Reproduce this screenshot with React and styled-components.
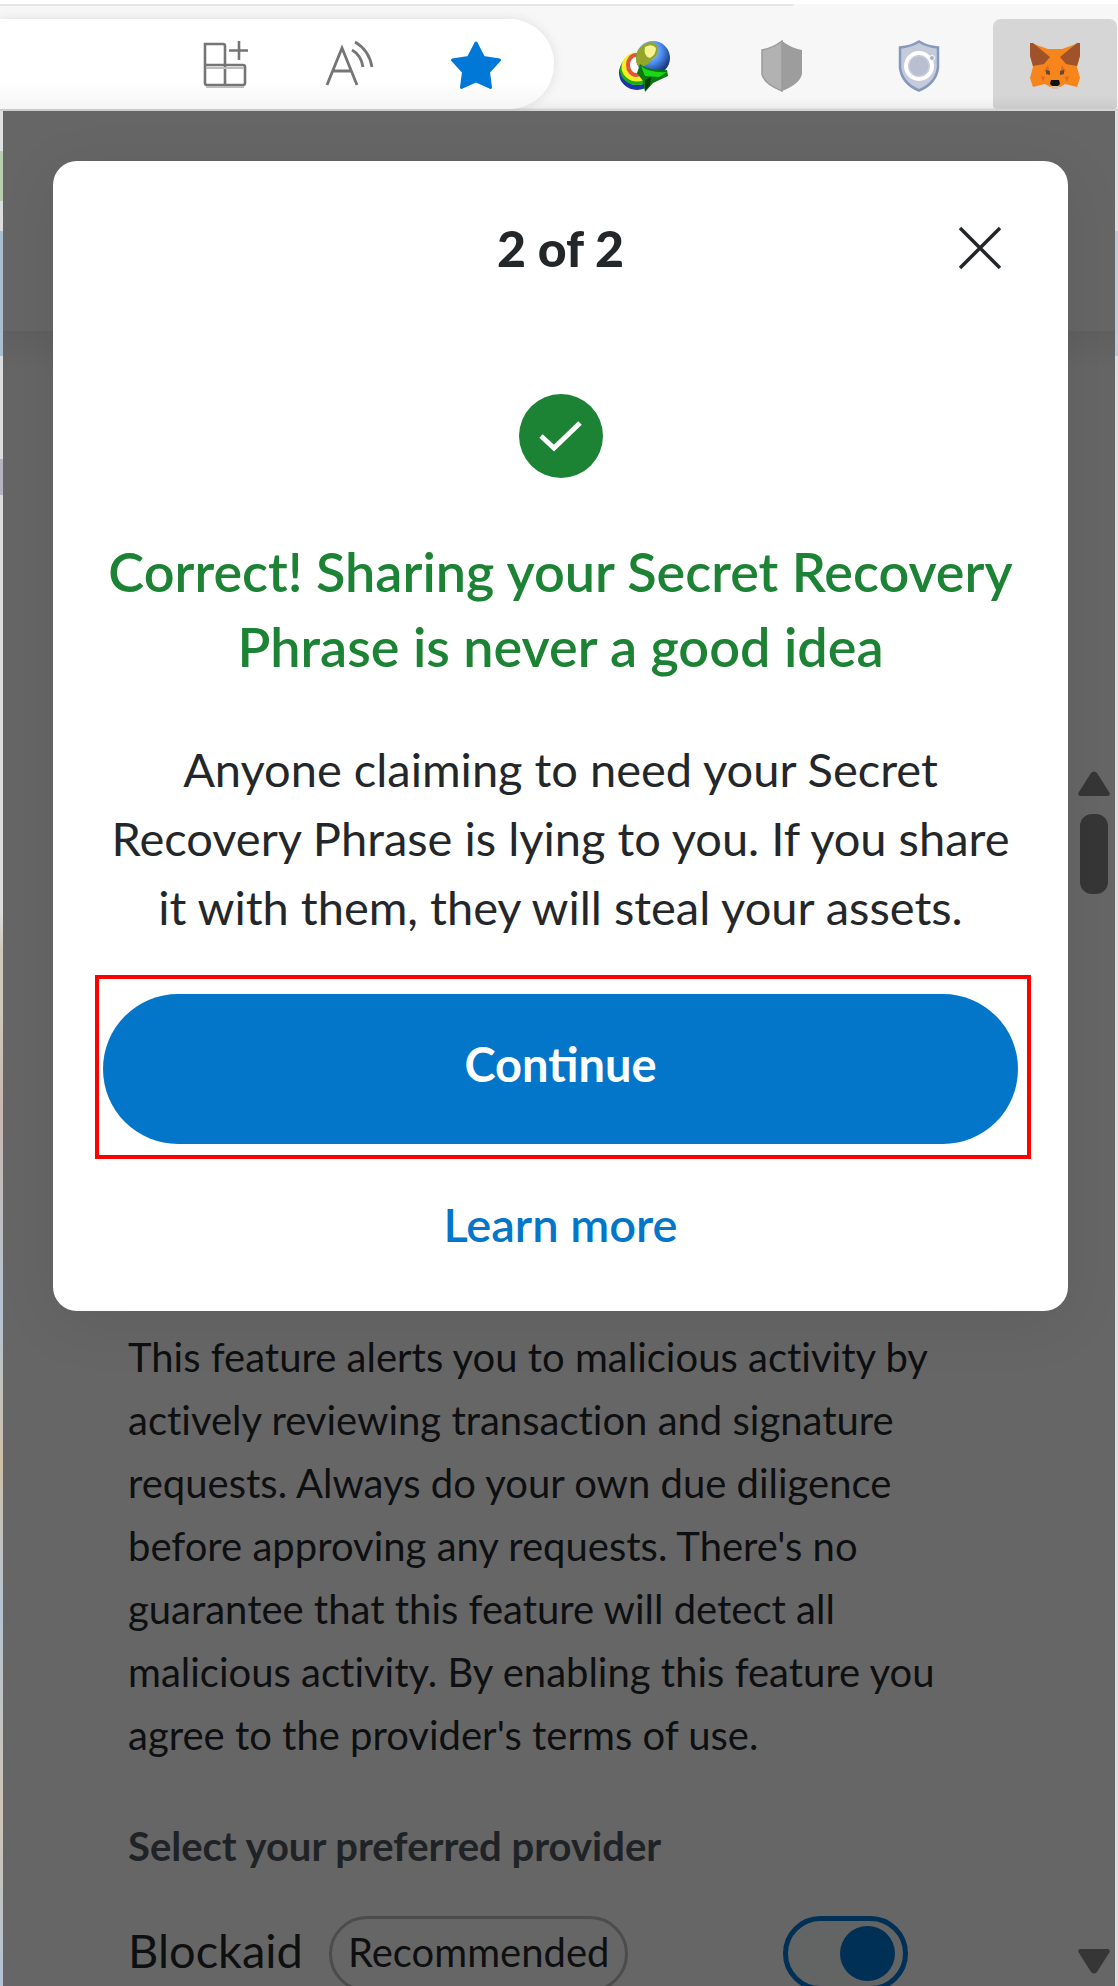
import React from "react";
import styled, { createGlobalStyle } from "styled-components";

const GlobalStyle = createGlobalStyle`
  *, *::before, *::after { box-sizing: border-box; }
  body {
    margin: 0;
    background: #d9dcdf;
    font-family: Lato, "Open Sans", sans-serif;
    font-variant-ligatures: none;
  }
  h1, h2, h3, p { margin: 0; }
  button { font-family: inherit; border: 0; padding: 0; background: none; cursor: pointer; }
`;

const Window = styled.div`
  display: flex;
  flex-direction: column;
  height: 100vh;
  overflow: hidden;
`;

const Browser = styled.header`
  display: flex;
  flex: none;
  height: 111px;
  padding-top: 19px;
  background:
    linear-gradient(#e6e6e6, #e6e6e6) 0 4px / 71% 2px no-repeat,
    linear-gradient(#fff 0 4px, #f7f7f7 4px 98px, #eeeeee 108px, #d4d4d4 109px);
`;

const AddressBar = styled.div`
  display: flex;
  flex: 1;
  align-items: center;
  justify-content: flex-end;
  gap: 75px;
  height: 90px;
  padding: 4px 52px 2px 0;
  border-radius: 0 45px 45px 0;
  background: linear-gradient(#fff 70%, #f5f5f5);
  box-shadow: 0 0 12px rgba(0, 0, 0, 0.1);
`;

const Extensions = styled.nav`
  display: flex;
  align-items: center;
  justify-content: flex-end;
  width: 564px;
  height: 90px;
  padding-right: 1px;
`;

const ToolButton = styled.button`
  display: flex;
  align-items: center;
  justify-content: center;
`;

const ExtensionButton = styled.button`
  display: flex;
  align-items: center;
  justify-content: center;
  width: ${(p) => (p.$active ? 124 : 137)}px;
  height: 90px;
  margin-left: ${(p) => (p.$active ? 6 : 0)}px;
  padding-top: 4px;
  border-radius: 8px 8px 4px 4px;
  background: ${(p) => (p.$active ? "linear-gradient(#d6d6d6 85%, #cacaca)" : "none")};
`;

const Desktop = styled.div`
  display: flex;
  flex: 1;
  min-height: 0;
  padding: 0 3px;
  background:
    linear-gradient(#dfe1e2 0 40px, #b7cfae 40px 90px, #dcdddf 90px 120px, #a9bfd0 120px 245px, #dcdddf 245px 348px, #b4b3bf 348px 384px, #dcdddf 384px 800px, #cfc8b8 840px 900px, #c9b8b0 1000px, #b4c3d2 1200px, #cfc0a8 1350px, #b4c3d2 1500px, #d0c4b4 1700px, #b0c2d4) 0 0 / 3px 100% no-repeat,
    linear-gradient(#e0e0e0 0 120px, #c2ccd6 120px 245px, #e0e0e0 245px);
`;

const Popup = styled.main`
  position: relative;
  display: flex;
  flex: 1;
  flex-direction: column;
  overflow: hidden;
  background: #666;
`;

const PopupHeader = styled.div`
  flex: none;
  height: 220px;
`;

const PopupBody = styled.div`
  display: flex;
  flex: 1;
  min-height: 0;
  padding-top: 425px;
  background: linear-gradient(#606060, #666 40px);
`;

const Settings = styled.section`
  flex: 1;
  padding: 570px 80px 0 125px;
`;

const Description = styled.p`
  font-size: 40px;
  line-height: 63px;
  color: #0e0f11;
`;

const ProviderTitle = styled.h3`
  margin-top: 48px;
  font-size: 40px;
  font-weight: 700;
  line-height: 62px;
  color: #202326;
`;

const ProviderRow = styled.div`
  display: flex;
  align-items: flex-start;
  margin-top: 39px;
  padding-right: 84px;
  color: #0e0f11;
`;

const ProviderName = styled.label`
  font-size: 47px;
  line-height: 68px;
`;

const Badge = styled.span`
  margin-left: 26px;
  padding: 0 16px 4px;
  border: 3px solid #4c4c4c;
  border-radius: 38px;
  font-size: 40px;
  line-height: 66px;
`;

const Toggle = styled.input`
  appearance: none;
  display: flex;
  align-items: center;
  justify-content: flex-end;
  width: 125px;
  height: 75px;
  margin: 0 0 0 auto;
  padding-right: 8px;
  border: 5px solid #003056;
  border-radius: 38px;
  background: #636564;
  cursor: pointer;

  &::before {
    content: "";
    width: 55px;
    height: 55px;
    border-radius: 50%;
    background: #003056;
  }
`;

const ScrollBar = styled.div`
  display: flex;
  flex: none;
  flex-direction: column;
  align-items: center;
  width: 43px;
  padding: 15px 0 12px;
`;

const Thumb = styled.div`
  width: 28px;
  height: 80px;
  margin: 18px 0 auto;
  border-radius: 12px;
  background: #363636;
`;

const Overlay = styled.div`
  position: absolute;
  inset: 0;
  padding: 50px 47px 0 50px;
`;

const Dialog = styled.section`
  display: flex;
  flex-direction: column;
  padding: 53px 42px 55px;
  border-radius: 24px;
  background: #fff;
  box-shadow: 0 12px 60px rgba(0, 0, 0, 0.08);
  text-align: center;
`;

const DialogHeader = styled.div`
  display: grid;
  grid-template-columns: 1fr auto 1fr;
  align-items: center;
  padding: 0 24px;
`;

const StepTitle = styled.h1`
  grid-column: 2;
  font-size: 50px;
  font-weight: 900;
  line-height: 68px;
  color: #24272a;
`;

const CloseButton = styled.button`
  display: flex;
  justify-self: end;
`;

const StatusIcon = styled.svg`
  align-self: center;
  margin-top: 112px;
`;

const Headline = styled.h2`
  margin-top: 56px;
  font-size: 54px;
  font-weight: 600;
  line-height: 75px;
  color: #1c8234;
`;

const Message = styled.p`
  margin-top: 51px;
  padding: 0 12px;
  font-size: 47px;
  line-height: 69px;
  color: #24272a;
`;

const Highlight = styled.div`
  margin: 33px -5px 0 0;
  padding: 15px 9px 11px 4px;
  border: 4px solid #f00;
`;

const PrimaryButton = styled.button`
  width: 100%;
  height: 150px;
  padding-bottom: 10px;
  border-radius: 75px;
  background: #0376c9;
  color: #fff;
  font-size: 47px;
  font-weight: 700;
  line-height: 60px;
`;

const LearnMore = styled.a`
  align-self: center;
  margin-top: 33px;
  font-size: 47px;
  font-weight: 600;
  line-height: 64px;
  color: #0376c9;
  text-decoration: none;
`;

const AppsIcon = () => (
  <svg width="48" height="50" viewBox="0 0 48 50" fill="none" stroke="#757575" strokeWidth="2.6">
    <path d="M3 4h18q2 0 2 2v39H5q-2 0-2-2V4zM3 25h38q2 0 2 2v16q0 2-2 2H23M37 1v19M27 10.5h19" />
    <path d="M4 28h38M4 47h38" stroke="#bdbdbd" strokeWidth="2" />
  </svg>
);

const ReadAloudIcon = () => (
  <svg width="50" height="50" viewBox="0 0 50 50" fill="none" stroke="#757575" strokeWidth="2.8">
    <path d="M2 45L17 8L32 45M7 31h20" />
    <path d="M27 10q9 5 11 17M30 2q14 8 17 25" />
  </svg>
);

const StarIcon = () => (
  <svg width="52" height="50" viewBox="0 0 52 50" fill="#0078d7" stroke="#0078d7" strokeWidth="3" strokeLinejoin="round">
    <path d="M26 3L33.500 17.500L49.500 20L38.500 32L40.500 47.500L26 41L11.500 47.500L13.500 32L2.500 20L18.500 17.500Z" />
  </svg>
);

const DownloaderIcon = () => (
  <svg width="52" height="52" viewBox="0 0 52 52">
    <defs>
      <radialGradient id="globe" cx="0.4" cy="0.3" r="0.8">
        <stop offset="0" stopColor="#c5dcf4" />
        <stop offset="0.45" stopColor="#4b8ff0" />
        <stop offset="0.8" stopColor="#1d3f86" />
        <stop offset="1" stopColor="#14203c" />
      </radialGradient>
    </defs>
    <g fill="none">
      <ellipse cx="18" cy="33" rx="15.500" ry="14.500" stroke="#1c35a8" strokeWidth="5" />
      <ellipse cx="18" cy="30" rx="15" ry="13" stroke="#16b010" strokeWidth="4" />
      <ellipse cx="18" cy="27" rx="13" ry="12" stroke="#f4ee22" strokeWidth="5" />
      <ellipse cx="17" cy="25" rx="8" ry="10" stroke="#e0563c" strokeWidth="4" fill="#fff" />
    </g>
    <circle cx="34" cy="18" r="17" fill="url(#globe)" />
    <path d="M17 20q0-14 14-18q7 1 8 6q0 8-6 11q-4 7-12 8q-4-2-4-7z" fill="#93a628" />
    <path d="M26 7q7-4 11 1q0 7-6 10q-7-2-5-11z" fill="#f6f392" />
    <path d="M21 24q8 7 27 6l1 6l-15 7l-8 9l-2-11l-6-8z" fill="#0a7a10" />
    <path d="M22 26q8 7 26 6l-8 5l-14-1z" fill="#19d815" />
    <path d="M26 40l6-3l-1 8l-5 6z" fill="#053d08" />
  </svg>
);

const GreyShieldIcon = () => (
  <svg width="42" height="52" viewBox="0 0 42 52">
    <path d="M21 1q-9 7-20 9v24q2 10 20 17z" fill="#b2b2b2" stroke="#9b9b9b" strokeWidth="1.500" />
    <path d="M21 1q9 7 20 9v24q-2 10-20 17z" fill="#9d9d9d" />
  </svg>
);

const BlueShieldIcon = () => (
  <svg width="42" height="52" viewBox="0 0 42 52">
    <path d="M21 1.500q-8 5-19 6v20q2 16 19 23q17-7 19-23v-20q-11-1-19-6z" fill="#c5cbdb" stroke="#8598bd" strokeWidth="2.500" />
    <circle cx="21" cy="26" r="13" fill="#c8ccda" stroke="#fff" strokeWidth="4" />
    <circle cx="21" cy="26" r="9.500" fill="#b9bfd0" />
    <circle cx="34" cy="18" r="2.500" fill="#a5b1cc" stroke="#fff" strokeWidth="1" />
  </svg>
);

const FoxIcon = () => (
  <svg width="52" height="50" viewBox="0 0 52 50">
    <path d="M2 2l17 6h14L50 2l1 12l-3 12l3 11l-3 9l-12-3l-5 3H21l-5-3l-12 3l-3-9l3-11l-3-12z" fill="#f6851b" />
    <path d="M1 2l3 0l17 14l-6 7l-11 2l-3-10zM51 2l-3 0l-17 14l6 7l11 2l3-10z" fill="#a0522a" />
    <path d="M19 24l2 9l-6-3zM33 24l-2 9l6-3zM12 35l4 1l-2 5zM40 35l-4 1l2 5z" fill="#e06820" />
    <path d="M21 42h10l-2 6h-6z" fill="#d9bfa9" />
    <path d="M17 29l4 1v4l-4-1zM35 29l-4 1v4l4-1z" fill="#5c4a3d" />
    <path d="M22 39h8l1 4l-2 2h-6l-2-2z" fill="#101010" />
  </svg>
);

const Arrow = ({ down }) => (
  <svg width="32" height="25" viewBox="0 0 32 25" fill="#363636">
    <path d={down ? "M2 0H30Q33 1 31 4L19 23Q16 26 13 23L1 4Q-1 1 2 0Z" : "M2 25H30Q33 24 31 21L19 2Q16-1 13 2L1 21Q-1 24 2 25Z"} />
  </svg>
);

export default function App() {
  return (
    <Window>
      <GlobalStyle />
      <Browser>
        <AddressBar>
          <ToolButton aria-label="Apps"><AppsIcon /></ToolButton>
          <ToolButton aria-label="Read aloud"><ReadAloudIcon /></ToolButton>
          <ToolButton aria-label="Favorite"><StarIcon /></ToolButton>
        </AddressBar>
        <Extensions aria-label="Extensions">
          <ExtensionButton aria-label="Download manager"><DownloaderIcon /></ExtensionButton>
          <ExtensionButton aria-label="Shield"><GreyShieldIcon /></ExtensionButton>
          <ExtensionButton aria-label="Privacy"><BlueShieldIcon /></ExtensionButton>
          <ExtensionButton $active aria-label="MetaMask"><FoxIcon /></ExtensionButton>
        </Extensions>
      </Browser>
      <Desktop>
        <Popup>
          <PopupHeader />
          <PopupBody>
            <Settings>
              <Description>
                This feature alerts you to malicious activity by actively reviewing transaction and signature
                requests. Always do your own due diligence before approving any requests. There's no guarantee
                that this feature will detect all malicious activity. By enabling this feature you agree to the
                provider's terms of use.
              </Description>
              <ProviderTitle>Select your preferred provider</ProviderTitle>
              <ProviderRow>
                <ProviderName htmlFor="blockaid">Blockaid</ProviderName>
                <Badge>Recommended</Badge>
                <Toggle id="blockaid" type="checkbox" role="switch" defaultChecked />
              </ProviderRow>
            </Settings>
            <ScrollBar>
              <Arrow />
              <Thumb />
              <Arrow down />
            </ScrollBar>
          </PopupBody>
          <Overlay>
            <Dialog role="dialog" aria-labelledby="step">
              <DialogHeader>
                <StepTitle id="step">2 of 2</StepTitle>
                <CloseButton aria-label="Close">
                  <svg width="44" height="44" viewBox="0 0 44 44" stroke="#24272a" strokeWidth="3.500">
                    <path d="M2 2L42 42M42 2L2 42" />
                  </svg>
                </CloseButton>
              </DialogHeader>
              <StatusIcon width="84" height="84" viewBox="0 0 84 84" fill="none">
                <circle cx="42" cy="42" r="42" fill="#1c8234" />
                <path d="M22 42L35 54L61 29" stroke="#fff" strokeWidth="5" />
              </StatusIcon>
              <Headline>Correct! Sharing your Secret Recovery Phrase is never a good idea</Headline>
              <Message>
                Anyone claiming to need your Secret Recovery Phrase is lying to you. If you share it with them,
                they will steal your assets.
              </Message>
              <Highlight>
                <PrimaryButton>Continue</PrimaryButton>
              </Highlight>
              <LearnMore href="#learn-more">Learn more</LearnMore>
            </Dialog>
          </Overlay>
        </Popup>
      </Desktop>
    </Window>
  );
}
